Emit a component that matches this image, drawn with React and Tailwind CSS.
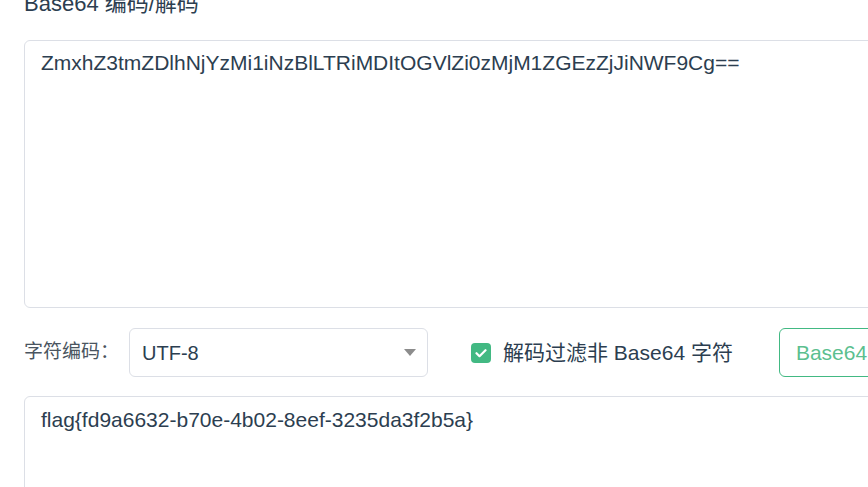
export default function App() {
  const font = { fontFamily: '"Liberation Sans", Arial, "Noto Sans CJK SC", sans-serif' };
  return (
    <div className="w-[868px] h-[487px] overflow-hidden bg-white px-6" style={font}>
      <h2 className="-mt-[7px] h-[47px] whitespace-nowrap text-[22px] leading-none text-[#2c3e50]">Base64 编码/解码</h2>

      <textarea
        readOnly
        value="ZmxhZ3tmZDlhNjYzMi1iNzBlLTRiMDItOGVlZi0zMjM1ZGEzZjJiNWF9Cg=="
        className="block w-[900px] h-[268px] resize-none rounded-md border border-[#dcdfe6] px-4 pt-[7px] text-[21px] leading-[30px] text-[#2c3e50] outline-none"
      />

      <div className="mt-5 flex w-[1000px] items-center whitespace-nowrap">
        <span className="w-[105px] shrink-0 text-[19px] text-[#4a5560]">字符编码：</span>
        <div className="flex h-[49px] w-[299px] shrink-0 items-center justify-between rounded-md border border-[#dcdfe6] pl-3 pr-[11px]">
          <span className="text-[20px] text-[#2c3e50]">UTF-8</span>
          <svg width="12" height="7" viewBox="0 0 12 7"><path d="M0 0h12L6 7z" fill="#8c8c8c" /></svg>
        </div>

        <label className="ml-[43px] flex shrink-0 items-center gap-3">
          <span className="flex h-5 w-5 items-center justify-center rounded-[4px] bg-[#42b983]">
            <svg width="12" height="10" viewBox="0 0 12 10"><path d="M1.5 5.2l3 3 6-6" fill="none" stroke="#fff" strokeWidth="2.2" strokeLinecap="round" strokeLinejoin="round" /></svg>
          </span>
          <span className="text-[21px] text-[#2c3e50]">解码过滤非 Base64 字符</span>
        </label>

        <button className="ml-[46px] h-[49px] w-[200px] shrink-0 rounded-md border border-[#42b983] pl-4 text-left text-[21px] text-[#5cbf8f]">Base64 编码</button>
      </div>

      <textarea
        readOnly
        value="flag{fd9a6632-b70e-4b02-8eef-3235da3f2b5a}"
        className="mt-[19px] block w-[900px] h-[200px] resize-none rounded-md border border-[#dcdfe6] px-4 pt-[8px] text-[21px] leading-[30px] text-[#2c3e50] outline-none"
      />
    </div>
  );
}
